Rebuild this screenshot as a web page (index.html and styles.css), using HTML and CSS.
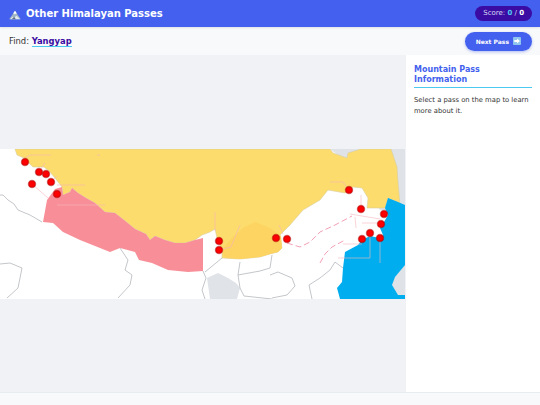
FILE: index.html
```html
<!DOCTYPE html>
<html lang="en">
<head>
    <meta charset="UTF-8">
    <meta name="viewport" content="width=device-width, initial-scale=1.0">
    <title>Other Himalayan Passes</title>
    <link rel="stylesheet" href="styles.css">
</head>
<body>
    <header class="top-bar">
        <h1 class="title">
            <svg class="title-icon" width="12" height="10" viewBox="0 0 14 12">
                <path d="M0 11 L5 4 L7 1 L9 4 L14 11 Z" fill="#9fb4c4"/>
                <path d="M5 4 L7 1 L9 4 L8 5 L7 4 L6 5.500 Z" fill="#fff"/>
                <path d="M1 11 L4 8 L6 9 L9 7 L13 11 Z" fill="#dfe8ef"/>
                <path d="M3 11 L6 8 L8 11 Z" fill="#5d7286"/>
            </svg>
            Other Himalayan Passes
        </h1>
        <div class="score">Score: <span class="score-num">0</span> / <span class="score-total">0</span></div>
    </header>

    <div class="find-bar">
        <div class="find">Find: <span class="find-name">Yangyap</span></div>
        <button class="next-btn" type="button">
            Next Pass
            <svg width="8" height="8" viewBox="0 0 9 9">
                <rect width="9" height="9" rx="1" fill="#8fc4ee"/>
                <path d="M1.500 3.500 H4.500 V1.800 L7.800 4.500 L4.500 7.200 V5.500 H1.500 Z" fill="#fff"/>
            </svg>
        </button>
    </div>

    <main class="content">
        <div class="map-wrap">
            <svg class="map" width="405" height="150" viewBox="0 149 405 150">
                <rect x="0" y="149" width="405" height="150" fill="#fff"/>

                <!-- neighbours in grey -->
                <path d="M330 149 H405 V210 H380 L350 165 Z" fill="#dfe2e7"/>
                <path d="M207 278 L218 273 L228 278 L236 283 L240 288 L237 299 H210 Z" fill="#e0e3e8"/>

                <!-- China -->
                <path class="china" d="M15 149 L17 155 L24 158 L29 163 L33 167 L44 167 L50 172 L55 178 L62 187 L63 195 L70 192 L72 188 L78 193 L86 198 L95 203 L105 212 L115 213 L124 220 L135 229 L146 234 L150 240 L155 236 L165 240 L175 243 L185 243 L195 240 L202 235 L210 232 L215 229 L217 238 L222 250 L222 258 L240 259 L260 257 L270 254 L278 252 L282 248 L280 235 L290 225 L303 210 L320 200 L328 190 L345 193 L353 187 L362 188 L368 198 L367 208 L385 208 L388 198 L398 202 L400 205 L398 182 L397 167 L391 149 L360 149 L358 150 L348 153 L347 158 L333 153 L330 149 Z"/>

                <!-- Bhutan side -->
                <path d="M222 250 L232 238 L243 228 L255 222 L270 228 L281 236 L282 248 L278 252 L270 254 L260 257 L240 259 L225 258 Z" fill="#fdd361"/>

                <!-- Nepal -->
                <path class="nepal" d="M72 188 L70 192 L63 195 L62 187 L55 189 L47 200 L43 222 L53 223 L63 232 L80 240 L100 248 L110 252 L120 248 L135 252 L139 260 L152 263 L168 270 L188 272 L203 271 L203 238 L195 240 L185 243 L175 243 L165 240 L155 236 L150 240 L146 234 L135 229 L124 220 L115 213 L105 212 L95 203 L86 198 L78 193 Z"/>

                <!-- Bay of Bengal -->
                <path class="sea" d="M405 205 L398 202 L388 198 L385 208 L388 215 L384 222 L380 228 L383 235 L380 238 L370 236 L362 240 L358 245 L345 252 L343 268 L342 282 L337 288 L340 299 H405 Z"/>
                <path d="M405 265 L395 277 L392 285 L398 295 H405 Z" fill="#dfe2e7"/>

                <!-- borders -->
                <g class="borders">
                    <path d="M0 195 L3 195 L8 200 L14 204 L18 210 L30 215 L42 222"/>
                    <path d="M0 264 L10 263 L22 268 L20 278 L18 288 L7 298"/>
                    <path d="M120 248 L128 260 L125 270 L132 275 L130 285 L118 298"/>
                    <path d="M203 271 L206 278 L202 290 L205 299"/>
                    <path d="M205 272 L222 258"/>
                    <path d="M238 275 L240 262 M240 288 L238 275 L260 271 L270 268 L272 255"/>
                    <path d="M240 288 L244 296 L272 299"/>
                    <path d="M270 275 L278 272 L292 278 L295 286 L287 295 L272 298"/>
                    <path d="M312 299 L309 285 L320 278 L330 270 L335 262 L343 268"/>
                </g>

                <!-- roads -->
                <g class="roads">
                    <path d="M25 158 L30 155 H51"/>
                    <path d="M97 155 H100"/>
                    <path d="M39 172 L45 163"/>
                    <path d="M51 182 L57 176"/>
                    <path d="M32 184 L48 198"/>
                    <path d="M57 185 H85"/>
                    <path d="M57 205 H105"/>
                    <path d="M215 212 V231"/>
                    <path d="M219 250 L231 247 L240 225"/>
                    <path d="M279 225 L283 234"/>
                    <path d="M349 190 L343 182 H330"/>
                    <path d="M361 209 V195"/>
                    <path d="M350 214 L380 219"/>
                    <path d="M362 223 H381"/>
                    <path d="M355 217 L356 228"/>
                    <path d="M362 244 H343"/>
                    <path d="M370 233 V258 H338"/>
                    <path d="M380 238 V263"/>
                </g>

                <g class="rivers">
                    <path d="M287 243 L300 247 L310 242 L320 232 L335 225 L352 216"/>
                    <path d="M320 263 L325 254 L332 247 L345 240"/>
                </g>

                <!-- pass markers -->
                <g class="markers">
                    <circle cx="25" cy="162" r="3.500"/>
                    <circle cx="39" cy="172" r="3.500"/>
                    <circle cx="46" cy="174" r="3.500"/>
                    <circle cx="51" cy="182" r="3.500"/>
                    <circle cx="32" cy="184" r="3.500"/>
                    <circle cx="57" cy="194" r="3.500"/>
                    <circle cx="219" cy="241" r="3.500"/>
                    <circle cx="219" cy="250" r="3.500"/>
                    <circle cx="276" cy="238" r="3.500"/>
                    <circle cx="287" cy="239" r="3.500"/>
                    <circle cx="349" cy="190" r="3.500"/>
                    <circle cx="361" cy="209" r="3.500"/>
                    <circle cx="384" cy="214" r="3.500"/>
                    <circle cx="381" cy="224" r="3.500"/>
                    <circle cx="370" cy="233" r="3.500"/>
                    <circle cx="380" cy="238" r="3.500"/>
                    <circle cx="362" cy="239" r="3.500"/>
                </g>
            </svg>
        </div>

        <aside class="info">
            <h2>Mountain Pass Information</h2>
            <p>Select a pass on the map to learn more about it.</p>
        </aside>
    </main>

    <footer class="foot"></footer>
</body>
</html>
```

FILE: styles.css
```css
* {
    margin: 0;
    padding: 0;
    box-sizing: border-box;
    font-family: 'DejaVu Sans', sans-serif;
}

html, body {
    height: 100%;
}

body {
    display: flex;
    flex-direction: column;
    background: #f0f2f5;
    overflow: hidden;
}

.top-bar {
    height: 27px;
    flex: none;
    display: flex;
    align-items: center;
    justify-content: space-between;
    padding: 0 8px 0 9px;
    background: #4361ee;
    box-shadow: 0 1px 2px rgba(0, 0, 0, .1);
    position: relative;
    z-index: 2;
}

.title {
    display: flex;
    align-items: center;
    gap: 5px;
    color: #fff;
    font-size: 10px;
    font-weight: 700;
}

.title-icon {
    margin-top: 2px;
}

.score {
    padding: 0 8px;
    height: 15px;
    line-height: 15px;
    border-radius: 8px;
    background: #3a0ca3;
    color: #d8d8f5;
    font-size: 7px;
    white-space: pre;
}

.score-num {
    color: #4cc9f0;
    font-weight: 700;
}

.score-total {
    color: #fff;
    font-weight: 700;
}

.find-bar {
    height: 28px;
    flex: none;
    display: flex;
    align-items: center;
    justify-content: space-between;
    padding: 0 8px 0 9px;
    background: #f8f9fa;
}

.find {
    font-size: 8.400px;
    color: #333;
}

.find-name {
    font-weight: 700;
    color: #3a0ca3;
    border-bottom: 1px solid #4cc9f0;
}

.next-btn {
    display: flex;
    align-items: center;
    gap: 4px;
    height: 19px;
    padding: 0 11px;
    border: none;
    border-radius: 10px;
    background: #4361ee;
    color: #fff;
    font-size: 6px;
    font-weight: 700;
    box-shadow: 0 1px 3px rgba(67, 97, 238, .4);
}

.content {
    flex: 1;
    display: flex;
    min-height: 0;
}

.map-wrap {
    width: 406px;
    display: flex;
    align-items: center;
}

.map {
    display: block;
}

.china {
    fill: #fcdc6c;
    stroke: #d8cfa0;
    stroke-width: .6;
}

.nepal {
    fill: #f88f98;
}

.sea {
    fill: #00aeef;
}

.borders path {
    fill: none;
    stroke: #b4b8bd;
    stroke-width: .8;
}

.roads path {
    fill: none;
    stroke: #f7b6bd;
    stroke-width: .6;
}

.rivers path {
    fill: none;
    stroke: #ef86a2;
    stroke-width: .8;
    stroke-dasharray: 6 3;
}

.markers circle {
    fill: #f00;
    stroke: rgba(170, 0, 0, .5);
    stroke-width: 1.500;
}

.info {
    flex: 1;
    background: #fff;
    padding: 10px 8px;
}

.info h2 {
    padding-bottom: 2px;
    margin-bottom: 7px;
    border-bottom: 1px solid #4cc9f0;
    color: #4361ee;
    font-size: 8px;
    line-height: 10px;
    font-weight: 700;
}

.info p {
    color: #333;
    font-size: 6.800px;
    line-height: 11px;
}

.foot {
    height: 13px;
    flex: none;
    background: #f8f9fa;
    border-top: 1px solid #e9ecef;
}
```
